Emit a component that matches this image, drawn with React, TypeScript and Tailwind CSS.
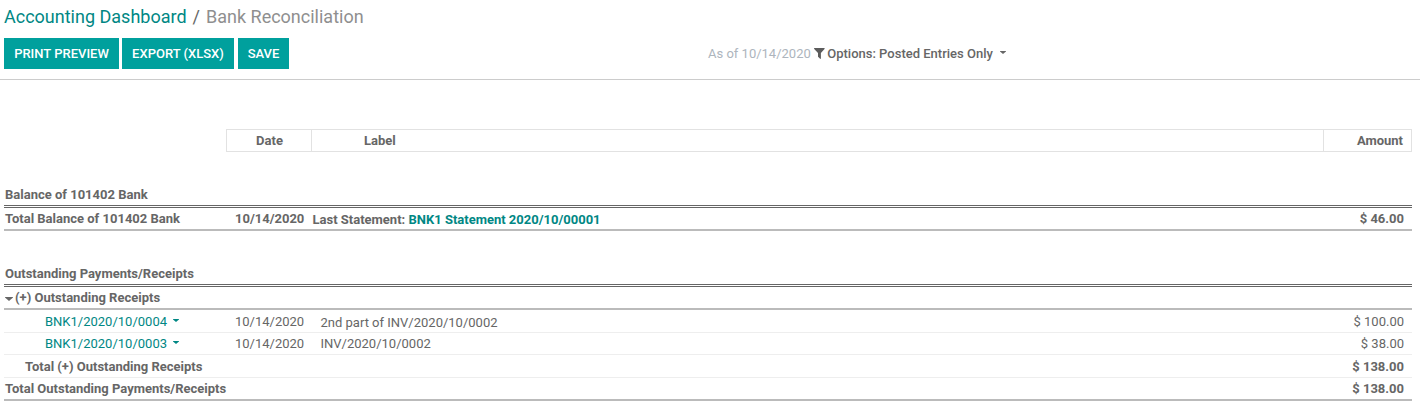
import React from "react";

function Cell({ className, children }: { className: string; children?: React.ReactNode }) {
  return <div className={"shrink-0 whitespace-pre " + className}>{children}</div>;
}

function Caret({ className }: { className: string }) {
  return (
    <svg className={className} viewBox="0 0 7 4" preserveAspectRatio="none" fill="currentColor">
      <path d="M0 0h7v.5L3.5 4 0 .5z" />
    </svg>
  );
}

type EntryProps = { className: string; labelClass: string; name: string; label: string; amount: string };

function EntryRow({ className, labelClass, name, label, amount }: EntryProps) {
  return (
    <div className={"flex border-b border-[#eeeeee] " + className}>
      <Cell className="flex h-5 w-[231px] items-start gap-[6px] pl-[41px] text-[#008784]">
        {name}
        <Caret className="mt-[7px] h-[3px] w-[6px]" />
      </Cell>
      <Cell className="w-[85.5px]">10/14/2020</Cell>
      <Cell className={"flex-1 " + labelClass}>{label}</Cell>
      <Cell className="pr-2">{amount}</Cell>
    </div>
  );
}

export default function App() {
  return (
    <div className="h-[408px] w-[1420px] overflow-hidden bg-white font-['Roboto',sans-serif] text-[13px] leading-5 text-[#666666]">
      <header className="h-20 border-b border-[#cccccc] pl-1">
        <nav className="flex h-[38px] gap-[6px] pt-[5px] text-[18px] leading-6">
          <a className="text-[#008784]">Accounting Dashboard</a>
          <span>/</span>
          <span className="text-[#8f8f8f]">Bank Reconciliation</span>
        </nav>
        <div className="flex">
          <div className="flex h-[31px] w-[704px] gap-[3px] font-medium text-white">
            <button className="w-[115px] bg-[#00a09d]">PRINT PREVIEW</button>
            <button className="w-[112px] bg-[#00a09d]">EXPORT (XLSX)</button>
            <button className="ml-px w-[51px] bg-[#00a09d]">SAVE</button>
          </div>
          <div className="flex items-center">
            <span className="text-[#adb5bd]">As of 10/14/2020</span>
            <svg className="mr-[2.5px] ml-[3px] h-[11px] w-[11px]" viewBox="0 0 11 11" fill="#5c5c5c">
              <path d="M.4 0h9.9q.6.5.2 1.1L6.9 4.9v5.7q-.3.5-.8.2L4 8.8V4.9L.2 1.1Q-.2.5.4 0z" />
            </svg>
            <span className="font-medium">Options: Posted Entries Only</span>
            <Caret className="mb-[2px] ml-[7px] h-[3px] w-[6px]" />
          </div>
        </div>
      </header>
      <main className="pr-2 pl-1">
        <div className="mt-[49px] ml-[222px] flex h-[23px] border border-[#e2e2e2] font-bold leading-[21px]">
          <Cell className="w-[85px] border-r border-[#e2e2e2] pl-px text-center">Date</Cell>
          <Cell className="w-[1012px] border-r border-[#e2e2e2] pl-[52px]">Label</Cell>
          <div className="flex-1 pr-2 text-right">Amount</div>
        </div>
        <div className="mt-[33px] h-[20px] pl-px font-bold">Balance of 101402 Bank</div>
        <div className="h-[3px] border-t-[3px] border-double border-[#666666]" />
        <div className="flex h-[23px] border-b-2 border-[#bbbbbb] pt-px font-bold">
          <Cell className="w-[231px] pl-px">Total Balance of 101402 Bank</Cell>
          <Cell className="w-[77.5px]">10/14/2020</Cell>
          <Cell className="flex-1 pt-px">
            Last Statement: <a className="text-[#008784]">BNK1 Statement 2020/10/00001</a>
          </Cell>
          <Cell className="pr-2">$ 46.00</Cell>
        </div>
        <div className="mt-[33px] h-[20px] pl-px font-bold">Outstanding Payments/Receipts</div>
        <div className="h-[3px] border-t-[3px] border-double border-[#666666]" />
        <div className="flex h-[23px] items-start border-b-2 border-[#bbbbbb] pt-px pl-px font-bold">
          <Caret className="mt-[9px] mr-[2px] h-[4px] w-[8px]" />
          (+) Outstanding Receipts
        </div>
        <EntryRow className="h-[23px] pt-[2px]" labelClass="pt-px" name="BNK1/2020/10/0004" label="2nd part of INV/2020/10/0002" amount="$ 100.00" />
        <EntryRow className="h-[22px] pt-px" labelClass="pt-0" name="BNK1/2020/10/0003" label="INV/2020/10/0002" amount="$ 38.00" />
        <div className="flex h-[23px] justify-between border-b border-[#eeeeee] pt-[2px] pr-2 pl-[21px] font-bold">
          <span>Total (+) Outstanding Receipts</span>
          <span>$ 138.00</span>
        </div>
        <div className="flex h-[23px] justify-between border-b-2 border-[#bbbbbb] pt-px pr-2 pl-px font-bold">
          <span>Total Outstanding Payments/Receipts</span>
          <span>$ 138.00</span>
        </div>
      </main>
    </div>
  );
}
